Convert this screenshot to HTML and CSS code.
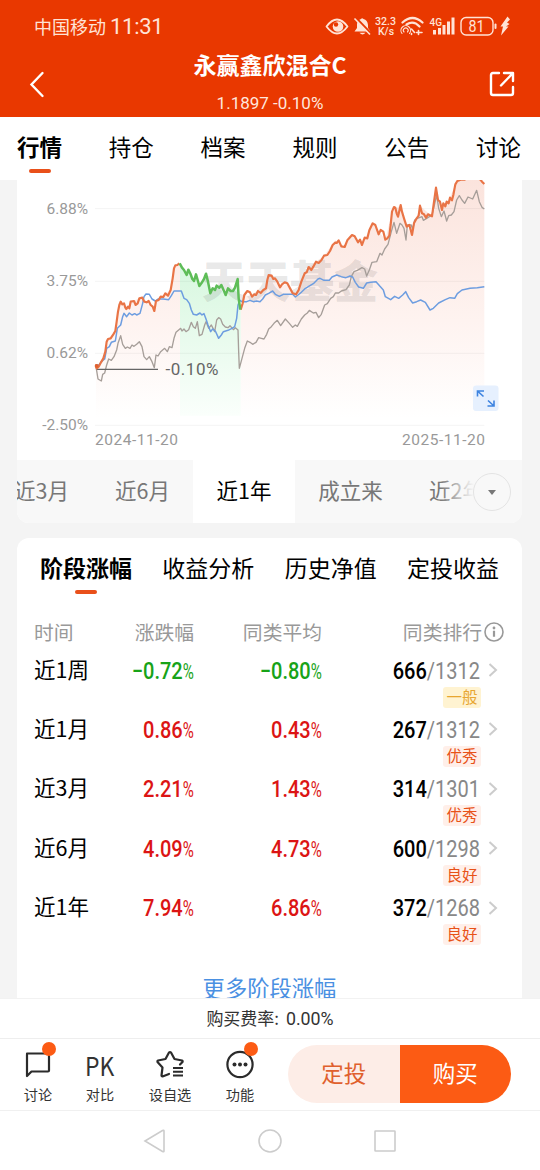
FILE: index.html
```html
<!DOCTYPE html>
<html lang="zh-CN">
<head>
  <meta charset="UTF-8">
  <meta name="viewport" content="width=device-width, initial-scale=1.0">
  <title>永赢鑫欣混合C</title>
  <link rel="stylesheet" href="styles.css">
</head>
<body>
  <!-- Header -->
  <header class="header">
    <div class="status-bar">
      <div class="carrier">中国移动 <span class="clock">11:31</span></div>
      <svg class="status-icons" width="187" height="26" viewBox="325 13 187 26">
        <g fill="none" stroke="#ffe3d6" stroke-width="1.8" stroke-linecap="round" stroke-linejoin="round">
          <path d="M326.5 26.5Q337 12.5 347.5 26.5Q337 40.5 326.5 26.5Z"/>
          <path d="M402.500 22.500Q412.500 13.500 422.500 22.500M406.500 24.500Q413.500 20 419.500 26.500" stroke-width="2.200"/>
          <path d="M402 33.500A4.800 4.800 0 1 1 409.500 33.500M404 32A2.400 2.400 0 1 1 407.500 32" stroke-width="1.100"/>
          <path d="M411.500 29L414.500 32.500M411.500 34.500V33.500M416.500 32.500H422M418.500 30.500V34.500" stroke-width="1.600"/>
          <rect x="461" y="17.500" width="32" height="17.500" rx="5" stroke-width="1.400"/>
          <path d="M495.500 24.500V28" stroke-width="2"/>
        </g>
        <g fill="#ffe3d6">
          <circle cx="338" cy="26.500" r="5.300"/>
          <path d="M354.500 31.500L357 28V24Q357.500 20 361 19Q362 17.500 363.500 19Q367.500 20 368 25V28L370.500 31.500Z"/>
          <path d="M359.500 32.800H365.500Q362.500 36 359.500 32.800Z"/>
          <rect x="433" y="30" width="3" height="4.500"/>
          <rect x="438" y="28" width="3" height="6.500"/>
          <rect x="442.500" y="25" width="3" height="9.500"/>
          <rect x="447" y="21.500" width="3" height="13"/>
          <rect x="451.500" y="17.500" width="3" height="17"/>
          <path d="M507.500 16.500L500.500 26.500H503L501 35.500L508.500 26.500H506L509.500 24L507 22.500L510 19.500Z"/>
        </g>
        <circle cx="336" cy="24.500" r="2.200" fill="#e93800"/>
        <path d="M355.500 17.500L370.500 33" stroke="#e93800" stroke-width="2.500"/>
        <path d="M354.500 18.500L370 34.500" stroke="#ffe3d6" stroke-width="1.600"/>
        <g class="status-text">
          <text x="375" y="25" font-size="10.500" textLength="21" lengthAdjust="spacingAndGlyphs">32.3</text>
          <text x="378" y="35" font-size="10.500" textLength="16" lengthAdjust="spacingAndGlyphs">K/s</text>
          <text x="429.500" y="25.500" font-size="10.500" textLength="12.500" lengthAdjust="spacingAndGlyphs">4G</text>
          <text x="468.500" y="32" font-size="16" font-weight="400" textLength="16" lengthAdjust="spacingAndGlyphs">81</text>
        </g>
      </svg>
    </div>
    <div class="title-bar">
      <svg class="back" width="16" height="28" viewBox="0 0 16 28"><path d="M13.500 3L2.500 14.500L13.500 26" fill="none" stroke="#fff" stroke-width="2.400" stroke-linecap="round"/></svg>
      <div class="fund">
        <h1 class="fund-name">永赢鑫欣混合C</h1>
        <p class="fund-value">1.1897 -0.10%</p>
      </div>
      <svg class="share" width="28" height="28" viewBox="0 0 28 28"><path d="M11 3H5Q3 3 3 5V23Q3 25 5 25H23Q25 25 25 23V17M16 3H25V11M25 3L13 15.500" fill="none" stroke="#fff" stroke-width="2.400" stroke-linecap="round" stroke-linejoin="round"/></svg>
    </div>
  </header>

  <nav class="tabs">
    <a class="tab active">行情</a>
    <a class="tab">持仓</a>
    <a class="tab">档案</a>
    <a class="tab">规则</a>
    <a class="tab">公告</a>
    <a class="tab">讨论</a>
  </nav>

  <main class="content">
    <!-- Performance chart -->
    <section class="card chart-card">
      <svg class="chart" width="505" height="280" viewBox="17 180 505 280">
        <defs>
          <linearGradient id="orangeFill" gradientUnits="userSpaceOnUse" x1="0" y1="0" x2="0" y2="730">
            <stop offset="0" stop-color="#fbe3dc"/>
            <stop offset="0.600" stop-color="#fef3f0"/>
            <stop offset="1" stop-color="#fff"/>
          </linearGradient>
          <linearGradient id="greenFill" gradientUnits="userSpaceOnUse" x1="0" y1="265" x2="0" y2="730">
            <stop offset="0" stop-color="#d7f7df"/>
            <stop offset="1" stop-color="#fbfffc"/>
          </linearGradient>
        </defs>
        <g transform="translate(0 175) scale(0.33333)" fill="none" stroke-linejoin="round">
          <path fill="url(#orangeFill)" d="M288 568L303 562L316 530L324 492L346 468L354 410L362 380L379 402L392 380L418 370L440 382L463 408L468 378L496 355L512 345L522 280L540 265V728H288ZM722 404L733 360L756 365L790 345L806 300L820 312L840 337L862 325L888 358L904 320L926 276L972 242L1006 196L1034 216L1056 180L1086 210L1118 145L1156 194L1176 110L1202 90L1220 155L1236 180L1260 92L1296 124L1308 38L1326 105L1350 68L1366 28L1376 15L1390 0H1440L1453 27V728H722Z"/>
          <path fill="url(#greenFill)" d="M540 265L560 300L565 284L582 318L588 298L598 333L618 296L631 355L650 332L677 360L684 340L699 348L713 312L716 370L722 404V722H540Z"/>
          <path stroke="#000" stroke-opacity="0.050" stroke-width="3" d="M285 101H1453M285 319H1453M285 535H1453M285 751H1453"/>
        </g>
        <text class="watermark" x="202" y="298" textLength="176">天天基金</text>
        <g transform="translate(0 175) scale(0.33333)" fill="none" stroke-linejoin="round">
          <polyline stroke="#a69e99" stroke-width="4" points="288,575 294,612 304,618 308,598 314,594 320,570 326,552 334,556 342,545 350,525 354,505 362,482 368,508 376,520 382,516 390,520 396,510 402,514 410,508 418,500 426,515 432,545 440,554 448,545 456,560 463,578 468,540 474,543 482,530 494,520 502,530 508,515 516,518 522,490 528,472 536,465 542,460 546,468 552,462 558,470 566,464 574,442 580,455 586,460 592,440 598,482 606,478 614,450 618,440 626,460 634,450 644,470 650,435 656,428 662,432 668,448 676,456 684,458 690,452 700,464 706,458 714,465 716,530 718,580 726,550 734,520 742,498 750,502 758,508 768,502 776,488 784,490 792,492 800,478 806,462 814,455 822,445 832,436 842,452 856,432 868,445 878,457 886,450 892,454 904,432 914,420 922,414 928,406 940,414 948,412 956,428 964,418 974,390 982,386 992,370 1000,365 1006,354 1016,354 1024,348 1038,344 1048,330 1054,305 1062,290 1072,286 1086,278 1094,282 1100,303 1108,285 1116,262 1130,260 1140,235 1146,240 1154,222 1164,208 1174,170 1182,142 1190,175 1200,145 1206,150 1212,160 1218,195 1222,150 1234,150 1238,165 1244,135 1252,130 1266,125 1270,136 1280,130 1296,120 1302,95 1310,60 1316,100 1324,125 1332,108 1340,138 1346,122 1354,120 1362,110 1370,75 1378,62 1386,75 1394,85 1404,66 1418,72 1430,46 1438,80 1446,97 1453,102"/>
          <polyline stroke="#6d9de0" stroke-width="4.500" points="288,570 298,570 304,560 314,552 320,520 328,515 334,502 346,498 352,460 362,450 368,425 372,415 380,425 388,414 396,420 404,416 410,420 420,415 428,385 432,365 438,357 448,358 456,372 466,378 474,372 490,372 506,374 514,362 522,348 544,348 552,370 560,374 568,385 574,405 580,418 590,420 600,414 606,420 612,416 618,432 624,450 632,470 638,462 646,468 656,490 664,480 670,470 684,466 696,460 704,455 710,430 714,390 720,376 726,380 740,380 750,376 760,380 770,378 780,380 788,372 796,360 806,355 818,348 826,358 838,364 850,358 878,358 886,366 894,360 904,352 914,342 926,334 940,326 954,312 960,310 972,316 988,316 996,306 1010,300 1024,305 1038,308 1050,303 1058,306 1066,322 1076,336 1090,340 1100,324 1112,322 1128,320 1140,334 1150,345 1156,365 1172,374 1184,364 1196,370 1208,360 1217,350 1226,368 1238,384 1250,380 1262,375 1276,382 1290,405 1300,400 1316,384 1336,374 1350,368 1364,370 1372,356 1386,345 1400,342 1410,340 1432,338 1453,335"/>
          <path stroke="#666" stroke-width="4" d="M290 583H474"/>
          <g stroke="#e97446" stroke-width="6.500">
            <polyline points="288,568 290,580 296,575 303,562 310,550 316,530 320,500 324,492 332,490 340,478 346,468 350,440 354,410 358,390 362,380 367,388 372,385 376,398 379,402 384,395 388,400 392,380 402,378 407,390 413,385 418,370 427,368 433,380 440,382 446,378 452,390 458,395 463,408 468,378 476,375 482,365 490,366 496,355 504,362 512,345 518,310 522,280 526,271 532,270 538,265"/>
            <polyline points="722,404 728,385 733,360 742,348 750,352 756,365 763,358 768,360 774,348 782,354 790,345 798,340 802,315 806,300 815,302 820,312 825,310 832,320 840,337 846,328 854,322 862,325 870,340 878,355 888,358 896,345 904,320 914,295 920,292 926,276 934,285 940,275 948,260 956,264 964,256 972,242 982,240 990,228 998,210 1006,203 1010,204 1016,196 1024,214 1034,216 1042,196 1056,180 1064,184 1074,202 1080,194 1086,210 1094,188 1102,190 1108,166 1118,145 1126,150 1136,178 1142,165 1150,170 1156,194 1162,190 1168,182 1172,150 1176,110 1182,96 1186,98 1190,115 1194,125 1202,90 1206,110 1212,130 1220,155 1228,150 1236,180 1242,145 1250,130 1256,122 1260,92 1266,115 1272,118 1278,128 1284,118 1296,124 1300,95 1308,38 1314,75 1320,80 1326,105 1330,85 1336,94 1340,80 1346,85 1350,68 1356,76 1360,60 1366,28 1372,18 1382,14 1394,14 1400,10 1430,10 1440,13 1446,20 1453,27"/>
          </g>
          <circle cx="290" cy="573" r="6" fill="#e0612f"/>
          <polyline stroke="#5ebd58" stroke-width="7.500" points="539,265 546,278 552,285 560,300 565,284 572,298 577,312 582,318 588,298 593,315 598,333 604,325 612,312 618,296 624,320 631,355 638,340 645,345 650,332 658,338 664,330 672,348 677,360 684,340 692,348 699,348 705,338 713,312 716,370 721,404"/>
        </g>
        <g class="axis">
          <text x="88" y="213.500" text-anchor="end">6.88%</text>
          <text x="88" y="285.500" text-anchor="end">3.75%</text>
          <text x="88" y="357.500" text-anchor="end">0.62%</text>
          <text x="88" y="429.500" text-anchor="end">-2.50%</text>
          <text x="95" y="445" textLength="83">2024-11-20</text>
          <text x="402" y="445" textLength="83">2025-11-20</text>
        </g>
        <text class="low-label" x="165.500" y="374.500" textLength="53">-0.10%</text>
        <rect x="473" y="385.500" width="25.500" height="25.500" rx="3" fill="#e6f0fe"/>
        <path d="M477.500 396.500V391H484M477.500 391L483.500 396.500M494 400.500V406H487.500M494 406L488 400.500" fill="none" stroke="#3d83e0" stroke-width="1.600"/>
      </svg>
      <div class="periods">
        <div class="period">近3月</div>
        <div class="period">近6月</div>
        <div class="period active">近1年</div>
        <div class="period wide">成立来</div>
        <div class="period">近2年</div>
        <div class="period-more"><span class="more-circle"><i class="caret"></i></span></div>
      </div>
    </section>

    <!-- Stage returns -->
    <section class="card stage-card">
      <div class="sub-tabs">
        <a class="sub-tab active">阶段涨幅</a>
        <a class="sub-tab">收益分析</a>
        <a class="sub-tab">历史净值</a>
        <a class="sub-tab">定投收益</a>
      </div>
      <div class="row head">
        <span>时间</span>
        <span class="right">涨跌幅</span>
        <span class="right">同类平均</span>
        <span class="rank-head">同类排行<svg width="20" height="20" viewBox="0 0 20 20"><circle cx="10" cy="10" r="9" fill="none" stroke="#999" stroke-width="1.600"/><circle cx="10" cy="6" r="1.400" fill="#999"/><path d="M10 8.800V14.800" stroke="#999" stroke-width="2.200"/></svg></span>
      </div>
      <div class="row">
        <span class="name">近1周</span>
        <span class="num down">−0.72<small>%</small></span>
        <span class="num down">−0.80<small>%</small></span>
        <span class="num rank"><b>666</b>/1312</span>
        <svg class="arrow" width="10" height="16" viewBox="0 0 10 16"><path d="M1.500 2L8 8L1.500 14"/></svg>
        <span class="badge normal">一般</span>
      </div>
      <div class="row">
        <span class="name">近1月</span>
        <span class="num up">0.86<small>%</small></span>
        <span class="num up">0.43<small>%</small></span>
        <span class="num rank"><b>267</b>/1312</span>
        <svg class="arrow" width="10" height="16" viewBox="0 0 10 16"><path d="M1.500 2L8 8L1.500 14"/></svg>
        <span class="badge">优秀</span>
      </div>
      <div class="row">
        <span class="name">近3月</span>
        <span class="num up">2.21<small>%</small></span>
        <span class="num up">1.43<small>%</small></span>
        <span class="num rank"><b>314</b>/1301</span>
        <svg class="arrow" width="10" height="16" viewBox="0 0 10 16"><path d="M1.500 2L8 8L1.500 14"/></svg>
        <span class="badge">优秀</span>
      </div>
      <div class="row">
        <span class="name">近6月</span>
        <span class="num up">4.09<small>%</small></span>
        <span class="num up">4.73<small>%</small></span>
        <span class="num rank"><b>600</b>/1298</span>
        <svg class="arrow" width="10" height="16" viewBox="0 0 10 16"><path d="M1.500 2L8 8L1.500 14"/></svg>
        <span class="badge">良好</span>
      </div>
      <div class="row">
        <span class="name">近1年</span>
        <span class="num up">7.94<small>%</small></span>
        <span class="num up">6.86<small>%</small></span>
        <span class="num rank"><b>372</b>/1268</span>
        <svg class="arrow" width="10" height="16" viewBox="0 0 10 16"><path d="M1.500 2L8 8L1.500 14"/></svg>
        <span class="badge">良好</span>
      </div>
      <a class="more-link">更多阶段涨幅</a>
    </section>
  </main>

  <!-- Bottom actions -->
  <footer class="footer">
    <div class="fee">购买费率: <span class="fee-value">0.00%</span></div>
    <div class="actions">
      <div class="action">
        <svg width="30" height="30" viewBox="0 0 30 30"><path d="M4 4.500H25Q26 4.500 26 5.500V21.500Q26 22.500 25 22.500H8.500L4 27V5.500Q4 4.500 5 4.500Z" fill="none" stroke="#2b2b2b" stroke-width="2.200" stroke-linejoin="round"/></svg>
        <i class="dot"></i>
        <span>讨论</span>
      </div>
      <div class="action">
        <strong class="pk">PK</strong>
        <span>对比</span>
      </div>
      <div class="action">
        <svg width="30" height="30" viewBox="0 0 30 30"><path d="M14 25L7.500 27.500Q6.500 27.500 6.500 26.500L7.500 18.500L2.500 13Q2 12 3 11.500L10.500 10L14 3.500Q15 2.500 16 3.500L19.500 10L27 11.500Q28 12 27.500 13L25 15.500" fill="none" stroke="#2b2b2b" stroke-width="2.200" stroke-linecap="round" stroke-linejoin="round"/><path d="M18 19H28M18 22.800H28M18 26.600H28" stroke="#2b2b2b" stroke-width="2"/></svg>
        <span>设自选</span>
      </div>
      <div class="action">
        <svg width="30" height="30" viewBox="0 0 30 30"><circle cx="15" cy="15.500" r="12.600" fill="none" stroke="#2b2b2b" stroke-width="2.200"/><g fill="#2b2b2b"><circle cx="9.500" cy="15.500" r="2"/><circle cx="15" cy="15.500" r="2"/><circle cx="20.500" cy="15.500" r="2"/></g></svg>
        <i class="dot"></i>
        <span>功能</span>
      </div>
      <div class="buttons">
        <button class="btn plan">定投</button>
        <button class="btn buy">购买</button>
      </div>
    </div>
    <div class="system-nav">
      <svg width="24" height="24" viewBox="0 0 24 24"><path d="M2 12L19.500 1.500Q21 1 21 2V22Q21 23 19.500 22.500Z"/></svg>
      <svg width="24" height="24" viewBox="0 0 24 24"><circle cx="12" cy="12" r="11"/></svg>
      <svg width="24" height="24" viewBox="0 0 24 24"><rect x="2" y="2" width="20" height="20" rx="0.500"/></svg>
    </div>
  </footer>
</body>
</html>
```

FILE: styles.css
```css
* {
  box-sizing: border-box;
}
body {
  margin: 0;
  width: 540px;
  height: 1170px;
  overflow: hidden;
  display: flex;
  flex-direction: column;
  background-color: #f4f4f4;
  font-family: "Noto Sans CJK SC", sans-serif;
  color: #000;
}

/* Header */
.header {
  flex: none;
  height: 117px;
  background-color: #e93800;
  color: #fff;
}
.status-bar {
  display: flex;
  justify-content: space-between;
  align-items: center;
  height: 46px;
  padding: 6px 28px 0 34px;
}
.carrier {
  font-size: 18px;
  line-height: 26px;
  color: #ffe3d6;
  white-space: nowrap;
}
.clock {
  font-family: Roboto, sans-serif;
  font-size: 22px;
  letter-spacing: -0.3px;
}
.status-text {
  font-family: Roboto, sans-serif;
  font-weight: 500;
  fill: #ffe3d6;
}
.title-bar {
  display: flex;
  justify-content: space-between;
  height: 71px;
  padding: 0 24px 0 29px;
}
.back, .share {
  margin-top: 24px;
}
.fund {
  text-align: center;
  margin-left: 7px;
}
.fund-name {
  margin: 0;
  font-size: 23px;
  line-height: 36px;
  font-weight: 700;
}
.fund-value {
  margin: 5px 0 0;
  font-family: Roboto, sans-serif;
  font-size: 17px;
  line-height: 32px;
  color: #ffe6dc;
}

/* Page tabs */
.tabs {
  flex: none;
  display: flex;
  justify-content: space-between;
  height: 63px;
  padding: 9px 19px 0 17px;
  background-color: #fff;
}
.tab {
  display: flex;
  flex-direction: column;
  align-items: center;
  font-size: 22.500px;
  line-height: 40px;
}
.active {
  font-weight: 700;
}
.tab.active::after, .sub-tab.active::after {
  content: "";
  width: 22px;
  height: 4px;
  border-radius: 2px;
  background-color: #e9501a;
}
.tab.active::after {
  margin-top: 3px;
}

.content {
  flex: none;
  height: 818px;
  padding: 0 18px 0 17px;
  overflow: hidden;
}
.card {
  background-color: #fff;
  border-radius: 12px;
  overflow: hidden;
}

/* Chart */
.chart-card {
  height: 343px;
  border-top-left-radius: 0;
  border-top-right-radius: 0;
}
.chart {
  display: block;
}
.watermark {
  font-size: 44px;
  font-weight: 900;
  fill: #555;
  fill-opacity: 0.15;
}
.axis {
  font-family: Roboto, sans-serif;
  font-size: 15.500px;
  fill: #999;
}
.low-label {
  font-family: Roboto, sans-serif;
  font-size: 17px;
  fill: #666;
}
.periods {
  position: relative;
  display: flex;
  height: 63px;
  background-color: #f8f8f8;
}
.period {
  flex: none;
  width: 101px;
  font-size: 21.500px;
  line-height: 60px;
  text-align: center;
  color: #777;
  white-space: nowrap;
}
.period:first-child {
  margin-left: -26px;
}
.period.wide {
  width: 111px;
}
.period.active {
  width: 102px;
  font-weight: 400;
  background-color: #fff;
  color: #000;
}
.period-more {
  position: absolute;
  top: 0;
  right: 0;
  display: flex;
  align-items: center;
  justify-content: flex-end;
  width: 82px;
  height: 63px;
  padding-right: 11px;
  background: linear-gradient(to right, rgba(248, 248, 248, 0), #f8f8f8 34px);
}
.more-circle {
  display: flex;
  align-items: center;
  justify-content: center;
  width: 38px;
  height: 38px;
  border: 1px solid #e4e4e4;
  border-radius: 50%;
}
.caret {
  margin-top: 2px;
  border: 4.500px solid transparent;
  border-top: 5px solid #777;
  border-bottom: 0;
}

/* Stage returns table */
.stage-card {
  height: 500px;
  margin-top: 15px;
  padding: 9px 17px 0;
}
.sub-tabs {
  display: flex;
  justify-content: space-between;
  height: 67px;
  padding: 0 6px;
}
.sub-tab {
  display: flex;
  flex-direction: column;
  align-items: center;
  font-size: 23px;
  line-height: 40px;
}
.sub-tab.active::after {
  margin-top: 3px;
}
.row {
  display: grid;
  grid-template-columns: 80px 80px 128px 158px 21px;
  grid-template-rows: 34px 20px;
  align-items: center;
  height: 59.400px;
}
.row.head {
  height: 39px;
  grid-template-rows: 35px;
  font-size: 19.800px;
  color: #999;
}
.right {
  text-align: right;
}
.rank-head {
  grid-column: 4 / 6;
  display: flex;
  align-items: center;
  justify-content: flex-end;
  margin-right: -3px;
}
.rank-head svg {
  margin-left: 2px;
}
.name {
  font-size: 21.500px;
  line-height: 32px;
  margin-top: -3px;
}
.num {
  margin-top: 2px;
  font-family: Roboto, sans-serif;
  font-size: 23px;
  font-weight: 500;
  text-align: right;
  transform: scaleX(0.87);
  transform-origin: right;
  white-space: nowrap;
}
.num small {
  display: inline-block;
  width: 13px;
  font-size: 22px;
  font-weight: 400;
  transform: scaleX(0.79);
  transform-origin: left;
}
.up {
  color: #dc1414;
}
.down {
  color: #18a318;
}
.rank {
  font-weight: 400;
  color: #888;
}
.rank b {
  font-weight: 500;
  color: #000;
}
.arrow {
  margin-left: 8px;
  fill: none;
  stroke: #ccc;
  stroke-width: 2;
}
.badge {
  grid-column: 4;
  justify-self: end;
  width: 38px;
  height: 21px;
  margin-right: -1px;
  border-radius: 3px;
  background-color: #ffefe9;
  color: #e85218;
  font-size: 15.500px;
  line-height: 19px;
  text-align: center;
}
.badge.normal {
  background-color: #fff3d1;
  color: #e8a630;
}
.more-link {
  display: block;
  margin-top: 17px;
  font-size: 22.300px;
  line-height: 40px;
  text-align: center;
  color: #4a90e2;
}

/* Footer */
.footer {
  flex: none;
  height: 172px;
  background-color: #fff;
}
.fee {
  height: 40px;
  border-top: 1px solid #f2f2f2;
  font-size: 17px;
  line-height: 37px;
  text-align: center;
  color: #333;
}
.fee-value {
  font-family: Roboto, sans-serif;
  font-size: 17.800px;
  margin-left: 3px;
}
.actions {
  display: grid;
  grid-template-columns: 76px 48px 92px 48px 276px;
  height: 72px;
  border-top: 1px solid #eee;
}
.action {
  position: relative;
  display: flex;
  flex-direction: column;
  align-items: center;
  padding-top: 10px;
  font-size: 14.200px;
  line-height: 30px;
  color: #333;
}
.action span {
  white-space: nowrap;
}
.pk {
  height: 30px;
  font-family: "Noto Sans CJK SC", sans-serif;
  font-size: 26px;
  font-weight: 400;
  line-height: 31px;
  transform: scaleX(0.88);
}
.dot {
  position: absolute;
  top: 3px;
  left: 50%;
  width: 14px;
  height: 14px;
  margin-left: 3.500px;
  border-radius: 50%;
  background-color: #fc5b14;
}
.buttons {
  display: flex;
  height: 58px;
  margin: 6px 29px 0 24px;
  border-radius: 29px;
  overflow: hidden;
}
.btn {
  flex: 1;
  border: 0;
  padding: 0 0 4px;
  font-family: inherit;
  font-size: 22.500px;
}
.plan {
  background-color: #fdede7;
  color: #e0602d;
}
.buy {
  background-color: #fc5b14;
  color: #fff;
}
.system-nav {
  display: flex;
  justify-content: center;
  gap: 91px;
  height: 60px;
  padding-top: 18px;
  border-top: 1px solid #f0f0f0;
}
.system-nav svg {
  fill: none;
  stroke: #ccc;
  stroke-width: 1.600;
}
```
